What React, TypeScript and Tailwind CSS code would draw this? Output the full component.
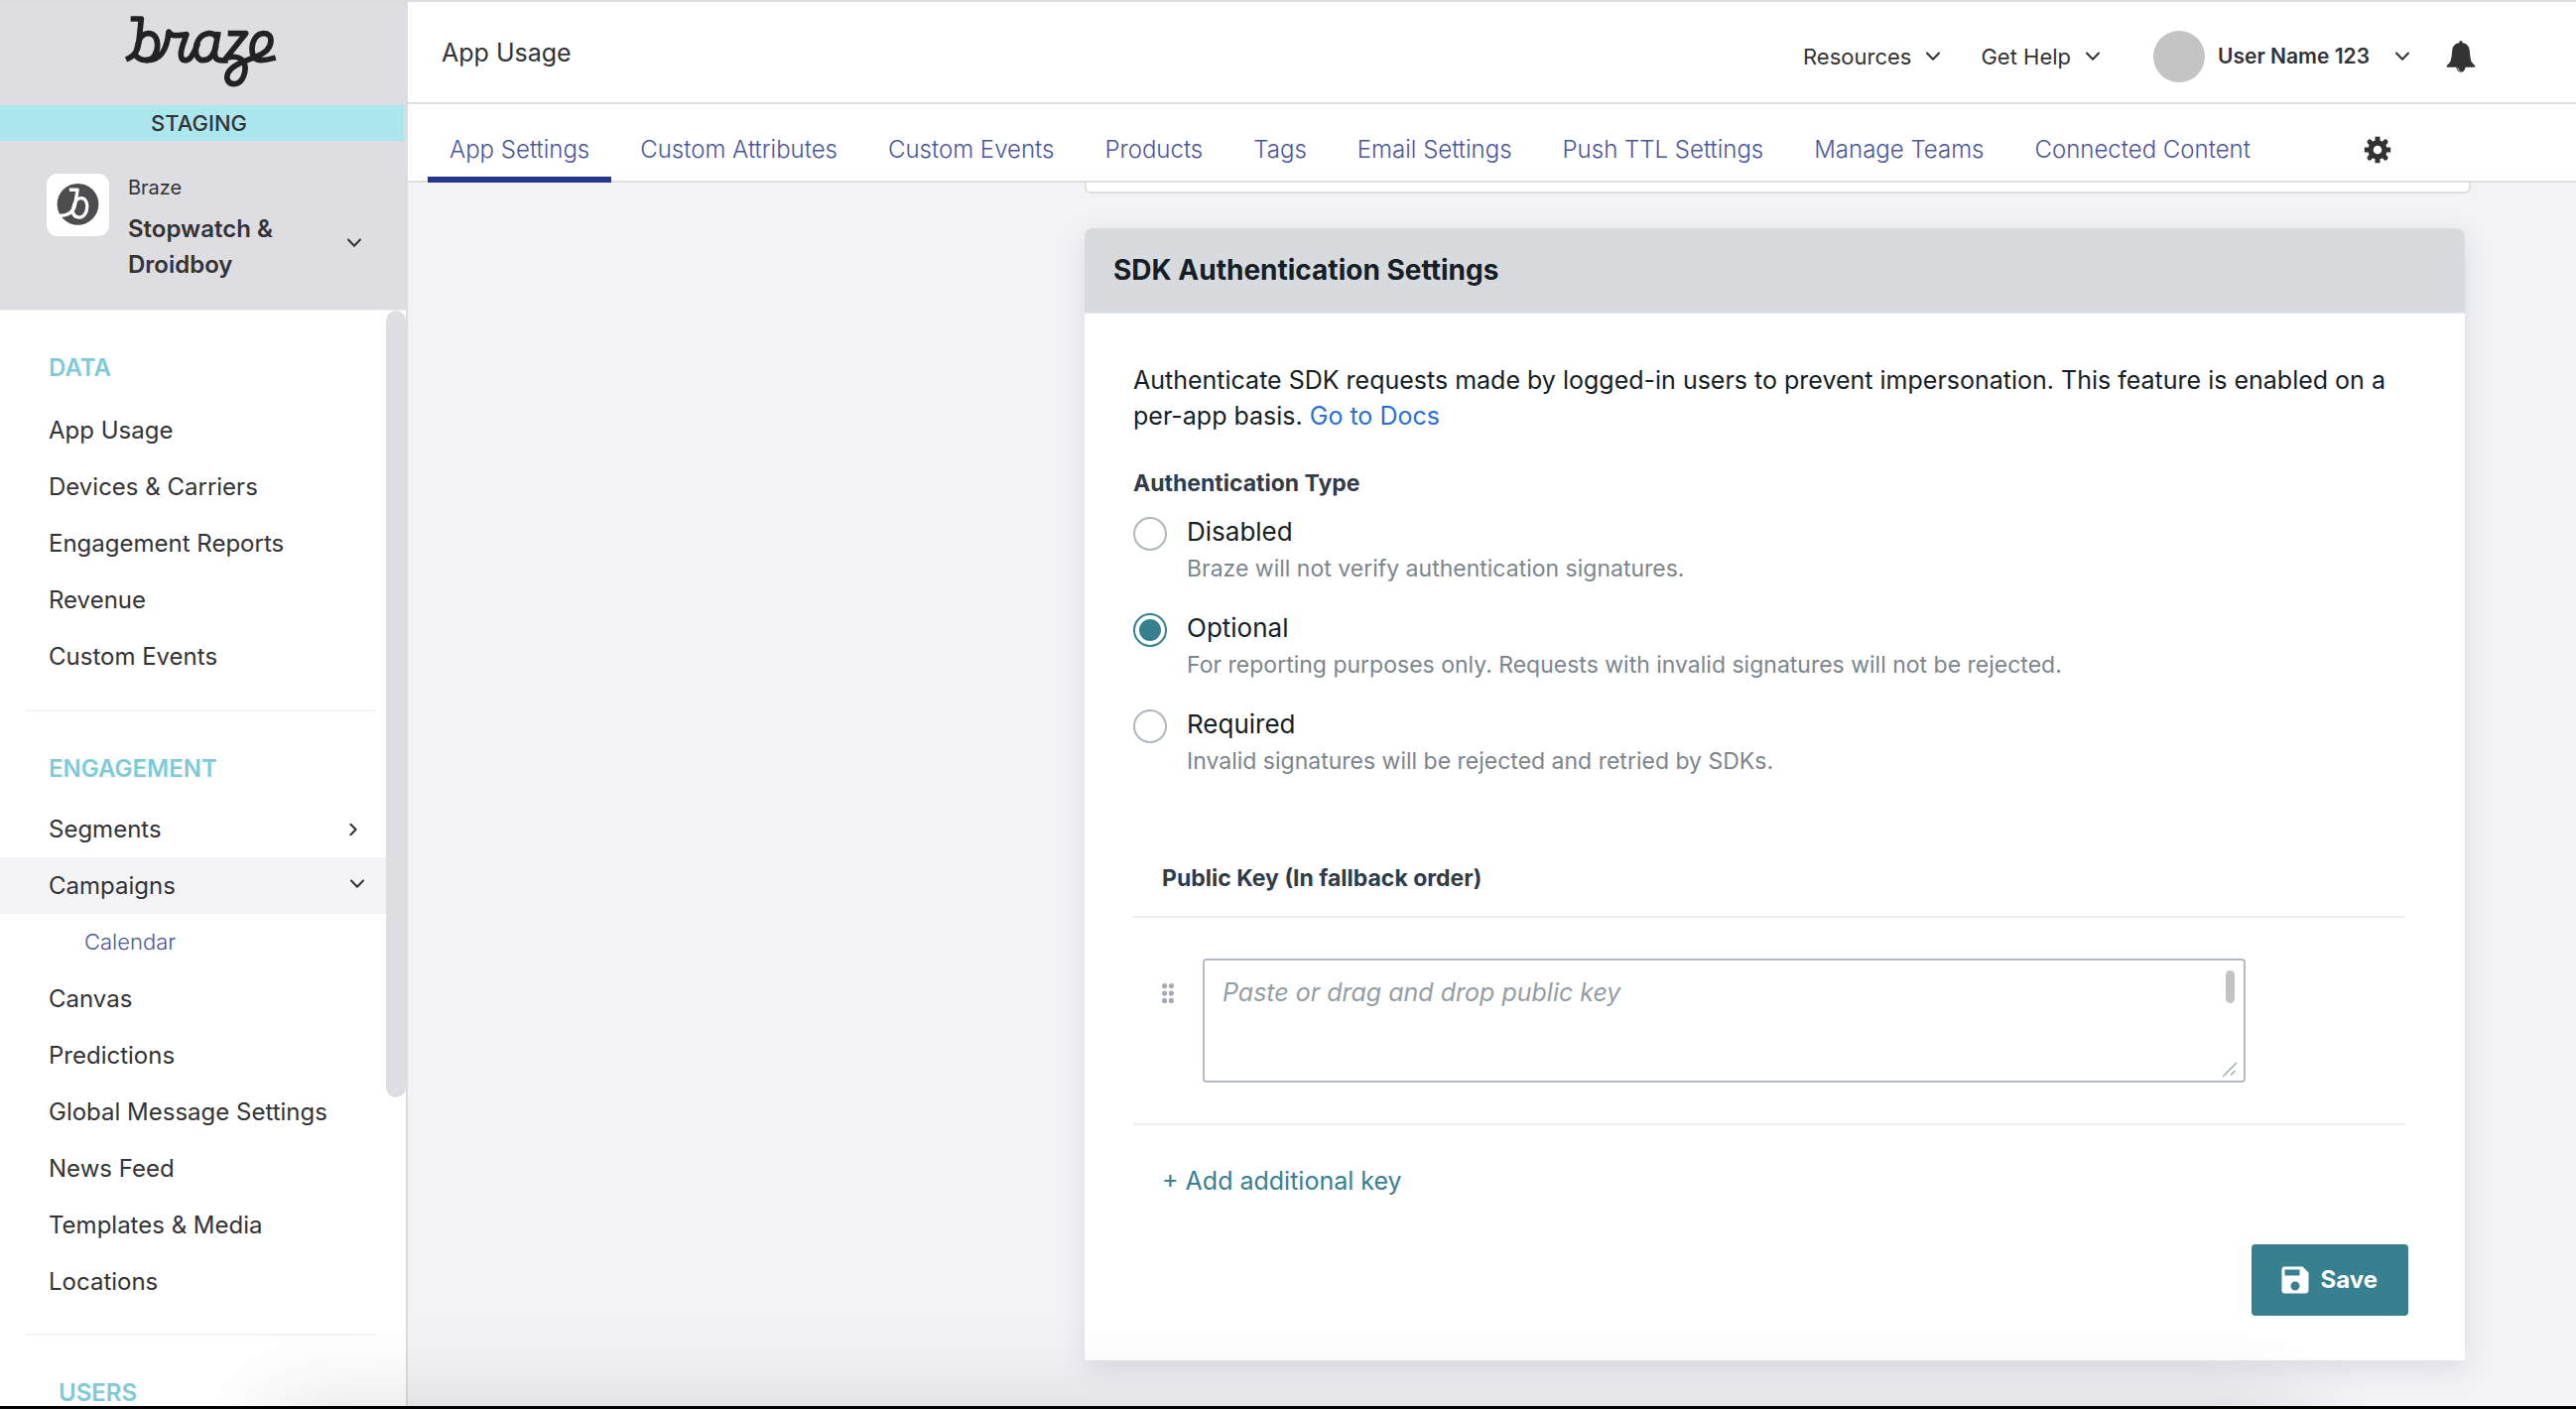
import React, { useState } from "react";
import { MdSave } from "react-icons/md";

const TABS = [
  "App Settings",
  "Custom Attributes",
  "Custom Events",
  "Products",
  "Tags",
  "Email Settings",
  "Push TTL Settings",
  "Manage Teams",
  "Connected Content",
];

const AUTH_TYPES = [
  { id: "disabled", label: "Disabled", help: "Braze will not verify authentication signatures." },
  {
    id: "optional",
    label: "Optional",
    help: "For reporting purposes only. Requests with invalid signatures will not be rejected.",
  },
  { id: "required", label: "Required", help: "Invalid signatures will be rejected and retried by SDKs." },
];

function BrazeLogo() {
  return (
    <svg
      viewBox="0 0 504 252"
      className="h-[84px] w-[168px]"
      fill="none"
      stroke="#222224"
      strokeWidth="17"
      strokeLinejoin="round"
      role="img"
      aria-label="Braze"
    >
      <path d="M38 33H70L63 100C60 130 50 145 24 156" />
      <path d="M57 128C60 98 72 77 91 77C110 77 119 92 119 112C119 138 106 158 84 158C68 158 56 150 50 138" />
      <path d="M84 158C130 160 148 125 153 72C160 88 180 83 207 80C199 104 190 122 190 140C190 164 211 163 222 146C232 130 238 118 241 106" />
      <path d="M303 72C300 100 292 118 292 138C292 160 308 160 332 158" />
      <path d="M299 92C294 80 284 76 274 77C250 79 235 102 235 128C235 146 244 158 258 158C276 158 290 140 297 112" />
      <path d="M332 77H386L326 152C350 144 372 148 381 166C390 188 378 230 351 230C331 230 325 212 333 196C345 172 385 160 415 148C442 138 462 122 462 98C462 84 453 77 440 77C418 77 405 100 405 124C405 146 414 158 432 158C450 158 462 154 476 150" />
    </svg>
  );
}

function WorkspaceIcon() {
  return (
    <svg viewBox="0 0 190 190" className="h-[63px] w-[63px] shrink-0" role="img" aria-label="Braze workspace">
      <rect width="190" height="190" rx="34" fill="#fff" />
      <circle cx="95" cy="93" r="63" fill="#4d4d4f" />
      <g fill="none" stroke="#fff" strokeWidth="10" strokeLinejoin="round">
        <path d="M69 49H94L86 95C83 112 70 128 38 128" />
        <path d="M80 108C84 86 92 74 104 74C117 74 123 86 123 99C123 117 114 133 100 133C88 133 80 124 78 112" />
      </g>
    </svg>
  );
}

function ChevronDown() {
  return (
    <svg viewBox="0 0 16 10" className="h-[10px] w-4 shrink-0" fill="none" stroke="#333335" strokeWidth="2" aria-hidden="true">
      <path d="M2 1.5L8 7.8L14 1.5" strokeLinecap="round" strokeLinejoin="round" />
    </svg>
  );
}

function ChevronRight() {
  return (
    <svg viewBox="0 0 10 16" className="mr-1 h-[14px] w-[10px] shrink-0" fill="none" stroke="#333335" strokeWidth="2.4" aria-hidden="true">
      <path d="M2 2L8 8L2 14" strokeLinecap="round" strokeLinejoin="round" />
    </svg>
  );
}

function Bell() {
  return (
    <svg viewBox="0 0 30 32" className="h-8 w-[30px]" fill="#333335" aria-hidden="true">
      <path d="M15 0C16 0 16.6 .8 16.6 2.2C21 2.6 23.4 5.8 23.8 10C24.3 16 24.6 20 26.6 22.6C27.8 24 29.4 25 29.4 26C29.4 26.5 29 26.8 28.4 26.8H1.6C1 26.8 .6 26.5 .6 26C.6 25 2.2 24 3.4 22.6C5.4 20 5.7 16 6.2 10C6.6 5.8 9 2.6 13.4 2.2C13.4 .8 14 0 15 0Z" />
      <path d="M10.4 26H19.6C19.6 29.4 17.8 31.6 15 31.6C12.2 31.6 10.4 29.4 10.4 26Z" />
      <path d="M11.8 27.4C12 29 12.8 30 14 30.5" fill="none" stroke="#fff" strokeWidth=".9" />
    </svg>
  );
}

function Gear() {
  return (
    <svg viewBox="0 0 28 28" className="h-7 w-7" fill="none" stroke="#333335" aria-hidden="true">
      <circle cx="14" cy="14" r="7" strokeWidth="5.4" />
      <g strokeWidth="5" strokeLinecap="butt">
        <path d="M14 .8V5.5M14 22.5V27.2M.8 14H5.5M22.5 14H27.2" />
        <path d="M6 6L8.5 8.5M22 6L19.5 8.5M6 22L8.5 19.5M22 22L19.5 19.5" strokeLinecap="round" />
      </g>
    </svg>
  );
}

function SidebarHeading({ children }: { children: React.ReactNode }) {
  return <h2 className="text-2xl/9 font-semibold text-[#80cad8]">{children}</h2>;
}

function SidebarLink({ children }: { children: React.ReactNode }) {
  return (
    <li>
      <a href="#" className="block pl-[49px] text-2xl/[57px] text-[#333335]">
        {children}
      </a>
    </li>
  );
}

function Sidebar() {
  return (
    <aside className="flex w-[411px] shrink-0 flex-col border-r-2 border-[#dcdbe0] bg-white">
      <div className="shrink-0 bg-[#dedde2]">
        <div className="flex h-[104px] justify-center pt-[6px] pr-1">
          <BrazeLogo />
        </div>
        <div className="mr-[2px] bg-[#ace7ee] pr-[6px] text-center text-[22px]/9 font-medium text-[#333335]">STAGING</div>
        <div className="flex h-[170px] gap-[19px] pt-[33px] pr-[44px] pl-[47px]">
          <WorkspaceIcon />
          <div className="flex flex-1 justify-between">
            <div className="text-[#333335]">
              <p className="text-xl/7">Braze</p>
              <p className="mt-[10px] text-2xl/9 font-semibold">
                Stopwatch &amp;
                <br />
                Droidboy
              </p>
            </div>
            <button type="button" aria-label="Switch workspace" className="mt-[56px] h-7">
              <ChevronDown />
            </button>
          </div>
        </div>
      </div>
      <div className="relative min-h-0 flex-1 overflow-hidden border-t border-[#efeff2]">
        <nav aria-label="Main" className="w-[389px]">
          <div className="pt-10 pl-[49px]">
            <SidebarHeading>DATA</SidebarHeading>
          </div>
          <ul className="pt-4">
            <SidebarLink>App Usage</SidebarLink>
            <SidebarLink>Devices &amp; Carriers</SidebarLink>
            <SidebarLink>Engagement Reports</SidebarLink>
            <SidebarLink>Revenue</SidebarLink>
            <SidebarLink>Custom Events</SidebarLink>
          </ul>
          <hr className="mt-[25px] mr-[10px] ml-[26px] border-t-2 border-[#f3f3f5]" />
          <div className="pt-10 pl-[49px]">
            <SidebarHeading>ENGAGEMENT</SidebarHeading>
          </div>
          <ul className="pt-[14px]">
            <li>
              <button type="button" className="flex w-full items-center justify-between pr-6 pl-[49px] text-2xl/[57px] text-[#333335]">
                Segments
                <ChevronRight />
              </button>
            </li>
            <li>
              <button
                type="button"
                aria-expanded="true"
                className="flex w-full items-center justify-between bg-[#f3f3f6] pr-[21px] pl-[49px] text-2xl/[57px] text-[#333335]"
              >
                Campaigns
                <span className="pb-1">
                  <ChevronDown />
                </span>
              </button>
            </li>
            <li>
              <a href="#" className="block pl-[85px] text-[22px]/[57px] font-light text-[#4a569c]">
                Calendar
              </a>
            </li>
            <SidebarLink>Canvas</SidebarLink>
            <SidebarLink>Predictions</SidebarLink>
            <SidebarLink>Global Message Settings</SidebarLink>
            <SidebarLink>News Feed</SidebarLink>
            <SidebarLink>Templates &amp; Media</SidebarLink>
            <SidebarLink>Locations</SidebarLink>
          </ul>
          <hr className="mt-6 mr-[10px] ml-[26px] border-t-2 border-[#f3f3f5]" />
          <div className="pt-10 pl-[59px]">
            <SidebarHeading>USERS</SidebarHeading>
          </div>
        </nav>
        <div className="absolute top-0 right-0 h-[793px] w-5 rounded-full bg-[#dedde2]" />
      </div>
    </aside>
  );
}

function TopBar() {
  return (
    <header className="shrink-0 bg-white">
      <div className="flex h-[103px] items-center justify-between border-b-2 border-[#dedee3] pr-[101px] pl-[34px]">
        <h1 className="text-[25px]/9 text-[#333335]">App Usage</h1>
        <div className="flex items-center pt-[9px] text-[22px]/9 text-[#333335]">
          <button type="button" className="flex items-center gap-[14px]">
            Resources
            <ChevronDown />
          </button>
          <button type="button" className="ml-10 flex items-center gap-[14px]">
            Get Help
            <ChevronDown />
          </button>
          <button type="button" className="ml-[53px] flex items-center gap-[13px] text-[21px]/9 font-semibold">
            <span className="h-[52px] w-[52px] rounded-full bg-[#c4c4c4]" />
            User Name 123
            <span className="ml-3">
              <ChevronDown />
            </span>
          </button>
          <button type="button" aria-label="Notifications" className="ml-9">
            <Bell />
          </button>
        </div>
      </div>
      <nav aria-label="Settings" className="flex h-[79px] items-start gap-[7px] border-b-2 border-[#dedee3] pl-5">
        {TABS.map((tab, i) => (
          <a
            key={tab}
            href="#"
            aria-current={i === 0 ? "page" : undefined}
            className={
              "relative flex h-[79px] items-center border-b-[6px] px-[22px] pt-[19px] text-2xl/9 font-light whitespace-nowrap text-[#4a569c] " +
              (i === 0 ? "border-[#26368e]" : "border-transparent")
            }
          >
            {tab}
          </a>
        ))}
        <button type="button" aria-label="Settings options" className="mt-8 ml-[85px]">
          <Gear />
        </button>
      </nav>
    </header>
  );
}

function SdkAuthenticationCard() {
  const [authType, setAuthType] = useState("optional");
  return (
    <section className="mt-[35px] rounded-t-lg bg-white shadow-[0_8px_28px_rgba(50,60,110,0.13)]">
      <h2 className="rounded-t-lg border-b border-[#e3e6e8] bg-[#d7dbde] pl-[29px] text-[28px]/[85px] font-bold text-[#161e26]">
        SDK Authentication Settings
      </h2>
      <div className="pt-[49px] pr-[57px] pb-[45px] pl-[49px]">
        <p className="text-[25px]/9 text-[#161e26]">
          <span>
            Authenticate SDK requests made by logged-in users to prevent impersonation. This feature is enabled on a
          </span>{" "}
          <span>per-app basis.</span>{" "}
          <a href="#" className="text-[#2b6fd6]">
            Go to Docs
          </a>
        </p>

        <fieldset className="mt-8">
          <legend className="text-[23px]/9 font-bold text-[#303c47]">Authentication Type</legend>
          <div className="flex flex-col gap-[23px] pt-3">
            {AUTH_TYPES.map(({ id, label, help }) => (
              <div key={id} className="flex gap-5">
                <input
                  type="radio"
                  name="auth-type"
                  id={id}
                  checked={authType === id}
                  onChange={() => setAuthType(id)}
                  aria-describedby={id + "-help"}
                  className="mt-1 h-[34px] w-[34px] shrink-0 appearance-none rounded-full border-2 border-[#aeb7bd] bg-white bg-clip-content p-1 checked:border-[#368090] checked:bg-[#368090]"
                />
                <div>
                  <label htmlFor={id} className="block text-[26px]/[38px] text-[#161e26]">
                    {label}
                  </label>
                  <p id={id + "-help"} className="text-[23px]/9 text-[#7b868d]">
                    {help}
                  </p>
                </div>
              </div>
            ))}
          </div>
        </fieldset>

        <div className="mt-[82px] mr-[3px]">
          <label
            htmlFor="public-key"
            className="block border-b-2 border-[#eceeef] pb-5 pl-[29px] text-[23px]/9 font-bold text-[#303c47]"
          >
            Public Key (In fallback order)
          </label>
          <div className="flex items-start gap-[29px] border-b-2 border-[#eceeef] py-[41px] pr-[161px] pl-[29px]">
            <svg viewBox="0 0 12 20" className="mt-[25px] h-5 w-3 shrink-0" fill="#a3acb2" aria-hidden="true">
              <circle cx="2.6" cy="2.6" r="2.6" />
              <circle cx="9.4" cy="2.6" r="2.6" />
              <circle cx="2.6" cy="10" r="2.6" />
              <circle cx="9.4" cy="10" r="2.6" />
              <circle cx="2.6" cy="17.4" r="2.6" />
              <circle cx="9.4" cy="17.4" r="2.6" />
            </svg>
            <div className="relative flex flex-1">
              <textarea
                id="public-key"
                placeholder="Paste or drag and drop public key"
                className="h-[125px] w-full resize-none overflow-hidden rounded-sm border-2 border-[#b4bcc1] bg-white px-[18px] py-[14px] text-[25px]/9 text-[#161e26] placeholder:text-[#949da3] placeholder:italic"
              />
              <span className="absolute top-3 right-[11px] h-[33px] w-[9px] rounded-full bg-[#c3c3c3]" />
              <svg
                viewBox="0 0 16 16"
                className="absolute right-2 bottom-[5px] h-4 w-4"
                fill="none"
                stroke="#a3acb2"
                strokeWidth="1.6"
                strokeLinecap="round"
                aria-hidden="true"
              >
                <path d="M1.5 14.5L14.5 1.5M9.5 13L13 9.5" />
              </svg>
            </div>
          </div>
        </div>

        <button type="button" className="mt-[38px] ml-[29px] block text-[25px]/9 text-[#368090]">
          + Add additional key
        </button>

        <div className="mt-[46px] flex justify-end">
          <button
            type="button"
            className="flex h-[72px] items-center gap-2 rounded-[4px] bg-[#368090] pr-[31px] pl-[26px] text-2xl/9 font-bold text-white"
          >
            <MdSave className="h-9 w-9" aria-hidden="true" />
            Save
          </button>
        </div>
      </div>
    </section>
  );
}

export default function App() {
  return (
    <div className="relative flex h-screen overflow-hidden border-t-2 border-b-[3px] border-t-[#dcdbe0] border-b-black bg-[#f3f3f6] font-['Inter',sans-serif]">
      <Sidebar />
      <div className="flex min-w-0 flex-1 flex-col">
        <TopBar />
        <main className="min-h-0 flex-1 overflow-hidden pr-[112px] pl-[682px]">
          <div className="-mr-[6px] h-[11px] rounded-b-md border-2 border-t-0 border-[#dedee3] bg-white" />
          <SdkAuthenticationCard />
        </main>
      </div>
      <div className="pointer-events-none absolute right-[280px] -bottom-40 left-[270px] h-40 shadow-[0_0_90px_rgba(0,0,0,0.13)]" />
    </div>
  );
}
